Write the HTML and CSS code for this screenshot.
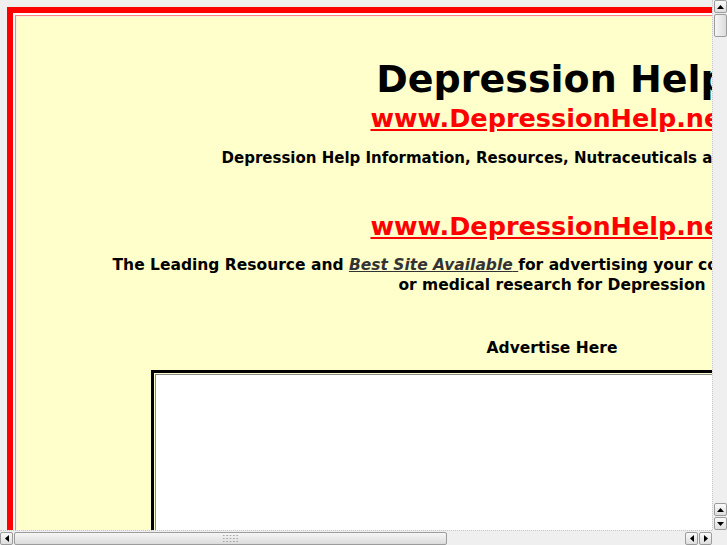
FILE: index.html
```html
<!DOCTYPE html>
<html>
<head>
<meta charset="utf-8">
<title>Depression Help</title>
<link rel="stylesheet" href="styles.css">
</head>
<body>
<div class="frame">
  <div class="cell">
    <h1 class="title">Depression Help</h1>
    <div class="site"><a href="#">www.DepressionHelp.net</a></div>
    <p class="info">Depression Help Information, Resources, Nutraceuticals and Natural Products</p>
    <div class="site site2"><a href="#">www.DepressionHelp.net</a></div>
    <p class="lead">The Leading Resource and <a class="best" href="#"><i>Best Site Available</i> </a>for advertising your company, products, services, etc.<br>or medical research for Depression</p>
    <p class="adv">Advertise Here</p>
    <div class="adbox"><div class="adinner"></div></div>
  </div>
</div>

<div class="vscroll">
  <div class="btn"><svg viewBox="0 0 7 4" class="tri"><polygon points="0,4 7,4 3.5,0"/></svg></div>
  <div class="thumb-v"></div>
  <div class="track"></div>
  <div class="btn"><svg viewBox="0 0 7 4" class="tri"><polygon points="0,4 7,4 3.5,0"/></svg></div>
  <div class="btn"><svg viewBox="0 0 7 4" class="tri"><polygon points="0,0 7,0 3.5,4"/></svg></div>
</div>
<div class="hscroll">
  <div class="btn"><svg viewBox="0 0 4 7" class="tri-h"><polygon points="4,0 4,7 0,3.5"/></svg></div>
  <div class="thumb-h"><span class="grip"></span></div>
  <div class="track-h"></div>
  <div class="btn"><svg viewBox="0 0 4 7" class="tri-h"><polygon points="4,0 4,7 0,3.5"/></svg></div>
  <div class="btn"><svg viewBox="0 0 4 7" class="tri-h"><polygon points="0,0 0,7 4,3.5"/></svg></div>
</div>
<div class="corner"></div>
</body>
</html>
```

FILE: styles.css
```css
html {
  overflow: hidden;
  background: #efefef;
}
body {
  margin: 7px 0 0 7px;
  font-family: "DejaVu Sans", Verdana, sans-serif;
  font-weight: bold;
  color: #000;
}
.frame {
  display: inline-block;
  border: 6px solid #ff0000;
  background: #ffffff;
  padding: 2px;
}
.cell {
  width: 1072px;
  min-height: 1400px;
  border: 1px solid #ff8080;
  box-shadow: inset 0 0 0 1px #fff0dc;
  background: #ffffcc;
  text-align: center;
  padding-top: 41px;
}
.title {
  margin: 0;
  font-size: 38px;
  line-height: 45px;
  font-weight: bold;
}
.site {
  font-size: 25.5px;
  line-height: 32px;
}
.site a {
  color: #ff0000;
  text-decoration: underline;
}
.info {
  margin: 14px 0 0;
  font-size: 15px;
  line-height: 20px;
}
.site2 {
  margin-top: 42px;
}
.lead {
  margin: 14px 0 0;
  font-size: 15.5px;
  line-height: 19.5px;
}
.best {
  color: #333333;
  text-decoration: underline;
}
.adv {
  margin: 43px 0 0;
  font-size: 15.5px;
  line-height: 20px;
}
.adbox {
  width: 794px;
  margin: 12px auto 0;
  border: 3px solid #000;
  padding: 1px;
  background: #ffffcc;
}
.adinner {
  height: 600px;
  border: 1px solid #8a8a8a;
  background: #ffffff;
}

/* fake GTK scrollbars */
.vscroll {
  position: fixed;
  top: 0;
  right: 0;
  width: 15px;
  height: 530px;
  background: #efefef;
  border-left: 1px dotted #c8c8c8;
  box-sizing: border-box;
  display: flex;
  flex-direction: column;
  align-items: center;
  gap: 1px;
}
.hscroll {
  position: fixed;
  left: 0;
  bottom: 0;
  width: 712px;
  height: 15px;
  background: #efefef;
  border-top: 1px dotted #c8c8c8;
  box-sizing: border-box;
  display: flex;
  align-items: center;
  gap: 1px;
}
.corner {
  position: fixed;
  right: 0;
  bottom: 0;
  width: 15px;
  height: 15px;
  background: #efefef;
}
.btn {
  width: 13px;
  height: 13px;
  box-sizing: border-box;
  border: 1px solid #9c9c9c;
  border-radius: 2px;
  background: linear-gradient(#fafafa, #dedede);
  display: flex;
  align-items: center;
  justify-content: center;
  flex: none;
}
.tri { width: 7px; height: 4px; fill: #000; }
.tri-h { width: 4px; height: 7px; fill: #000; }
.thumb-v {
  width: 13px;
  height: 23px;
  box-sizing: border-box;
  border: 1px solid #9c9c9c;
  border-radius: 2px;
  background: linear-gradient(90deg, #f6f6f6, #dcdcdc);
  flex: none;
}
.track { flex: 1; }
.track-h { flex: 1; }
.thumb-h {
  width: 433px;
  height: 13px;
  box-sizing: border-box;
  border: 1px solid #9c9c9c;
  border-radius: 2px;
  background: linear-gradient(#f6f6f6, #dcdcdc);
  flex: none;
  display: flex;
  align-items: center;
  justify-content: center;
}
.grip {
  width: 17px;
  height: 9px;
  background-image: radial-gradient(circle, #a8a8a8 0.7px, transparent 0.9px);
  background-size: 3.4px 3px;
}
```
